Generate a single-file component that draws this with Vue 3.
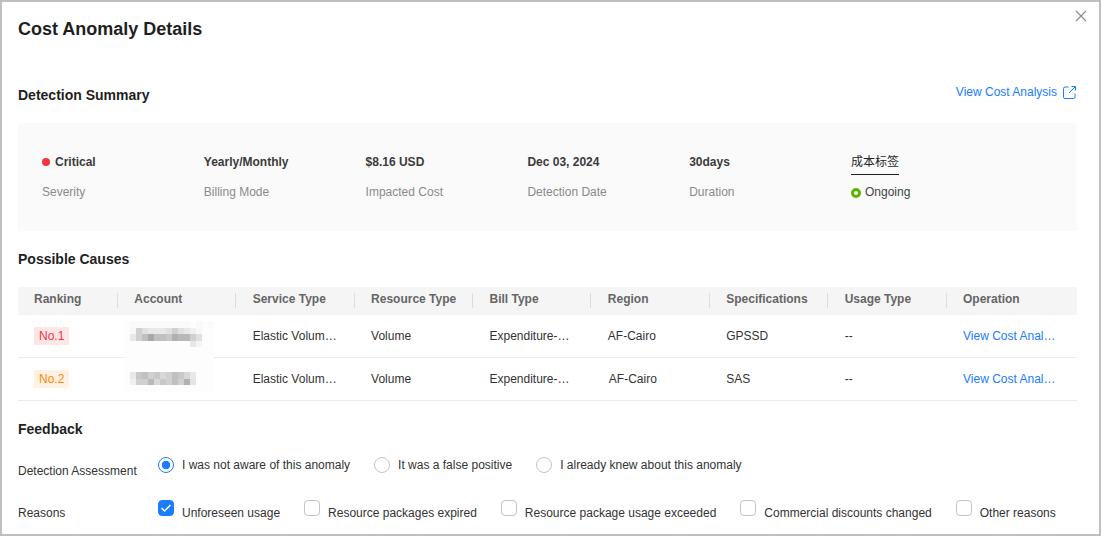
<script setup>
const summary = [
  { value: 'Critical', label: 'Severity', dot: true },
  { value: 'Yearly/Monthly', label: 'Billing Mode' },
  { value: '$8.16 USD', label: 'Impacted Cost' },
  { value: 'Dec 03, 2024', label: 'Detection Date' },
  { value: '30days', label: 'Duration' },
]
const heads = ['Ranking', 'Account', 'Service Type', 'Resource Type', 'Bill Type', 'Region', 'Specifications', 'Usage Type', 'Operation']
const F = 253
const rows = [
  {
    no: 'No.1', cls: 'red', region: 'AF-Cairo', spec: 'GPSSD', nudge: false, top: -15, pad: 0, h: 37,
    blur: [
      [F,250,250,250,250,250,250,250,250,250,250,F,249,F,251],
      [F,248,208,224,232,232,232,224,208,224,232,240,248,F,F],
      [252,232,208,192,168,192,192,200,176,184,184,208,224,F,F],
      [F,F,F,F,F,F,F,F,F,F,F,232,244,F,F],
    ],
  },
  {
    no: 'No.2', cls: 'orange', region: 'AF-Cairo', spec: 'SAS', nudge: true, top: -21, pad: 14, h: 34,
    blur: [
      [252,232,200,192,208,200,216,208,192,200,216,232,F,F,F],
      [252,240,208,208,184,216,200,208,192,208,176,228,F,F,F],
    ],
  },
]
const reasons = [
  { t: 'Unforeseen usage', on: true },
  { t: 'Resource packages expired' },
  { t: 'Resource package usage exceeded' },
  { t: 'Commercial discounts changed' },
  { t: 'Other reasons' },
]
const grey = v => `rgb(${v},${v},${v})`
</script>

<template>
  <div class="frame">
    <svg class="close" width="12" height="12" viewBox="0 0 12 12"><path d="M1 1l10 10M11 1L1 11" stroke="#8a8a8a" stroke-width="1.1" fill="none"/></svg>
    <h1 class="title">Cost Anomaly Details</h1>
    <div class="head-row">
      <h2>Detection Summary</h2>
      <a class="link top-link">View Cost Analysis
        <svg width="13" height="13" viewBox="0 0 13 13" fill="none" stroke="#1a7cff" stroke-width="1"><path d="M5.500 1H2A1.500 1.500 0 0 0 .5 2.500V11A1.500 1.500 0 0 0 2 12.500h8.500A1.500 1.500 0 0 0 12 11V7.500"/><path d="M6 7L12 1M8.500.5H12.500V4.500"/></svg>
      </a>
    </div>
    <div class="summary">
      <div v-for="s in summary" :key="s.label" class="cell">
        <div class="val"><i v-if="s.dot" class="dot"></i>{{ s.value }}</div>
        <div class="lab">{{ s.label }}</div>
      </div>
      <div class="cell">
        <div class="val"><span class="tag">成本标签</span></div>
        <div class="lab on"><i class="ring"></i>Ongoing</div>
      </div>
    </div>
    <h2 class="sec causes">Possible Causes</h2>
    <div class="table">
      <div class="tr th">
        <div v-for="h in heads" :key="h" class="td"><span>{{ h }}</span></div>
      </div>
      <div v-for="r in rows" :key="r.no" class="tr">
        <div class="td"><span class="rank" :class="r.cls">{{ r.no }}</span></div>
        <div class="td acc">
          <div class="blur" :style="{ top: r.top + 'px', paddingTop: r.pad + 'px', height: r.h + 'px' }">
            <div v-for="(line, i) in r.blur" :key="i" class="bl">
              <i v-for="(v, j) in line" :key="j" :style="{ background: grey(v) }"></i>
            </div>
          </div>
        </div>
        <div class="td">Elastic Volum…</div>
        <div class="td">Volume</div>
        <div class="td">Expenditure-…</div>
        <div class="td" :class="{ nudge: r.nudge }">{{ r.region }}</div>
        <div class="td">{{ r.spec }}</div>
        <div class="td">--</div>
        <div class="td blue">View Cost Anal…</div>
      </div>
    </div>
    <h2 class="sec feedback">Feedback</h2>
    <div class="form-row assess">
      <div class="fl">Detection Assessment</div>
      <div class="opts">
        <label class="opt"><i class="radio sel"></i>I was not aware of this anomaly</label>
        <label class="opt"><i class="radio"></i>It was a false positive</label>
        <label class="opt"><i class="radio"></i>I already knew about this anomaly</label>
      </div>
    </div>
    <div class="form-row reasons">
      <div class="fl">Reasons</div>
      <div class="opts">
        <label v-for="r in reasons" :key="r.t" class="copt">
          <i class="box" :class="{ sel: r.on }">
            <svg v-if="r.on" width="16" height="16" viewBox="0 0 16 16"><path d="M3.500 8l3 3 6-6" stroke="#fff" stroke-width="1.500" fill="none"/></svg>
          </i><span class="ctext">{{ r.t }}</span>
        </label>
      </div>
    </div>
  </div>
</template>

<style>
html, body { margin: 0; background: #fff; }
</style>
<style scoped>
.frame {
  box-sizing: border-box;
  width: 1101px;
  height: 536px;
  border: 2px solid #bfbfbf;
  padding: 0 22px 0 16px;
  position: relative;
  overflow: hidden;
  background: #fff;
  font-family: "Liberation Sans", Arial, "Noto Sans CJK SC", sans-serif;
  font-size: 12px;
  color: #333;
}
.close { position: absolute; right: 12px; top: 8px; }
h1, h2 { margin: 0; color: #1f1f1f; font-weight: 700; }
.title { font-size: 18px; line-height: 24px; margin-top: 15px; }
h2 { font-size: 14px; line-height: 20px; }
.head-row { display: flex; justify-content: space-between; margin-top: 44px; height: 20px; }
.link, .blue { color: #1a7cff; }
.top-link { display: flex; gap: 6px; align-items: center; margin-top: -6px; margin-right: 1px; }
.summary { display: flex; margin-top: 18px; height: 108px; background: #fafafa; padding-left: 24px; box-sizing: border-box; }
.cell { width: 161.8px; padding-top: 31px; flex: none; }
.val { height: 16px; line-height: 16px; font-weight: 700; color: #3a3a3a; display: flex; align-items: flex-start; white-space: nowrap; }
.lab { margin-top: 14px; line-height: 16px; color: #8a8a8a; }
.lab.on { display: flex; align-items: center; color: #444; }
.dot { width: 8px; height: 8px; border-radius: 50%; background: #f5333f; margin: 4px 5px 0 0; }
.ring { width: 10px; height: 10px; box-sizing: border-box; border: 3px solid #5cb300; border-radius: 50%; margin-right: 4px; margin-top: 2px; }
.tag { display: block; border-bottom: 1px solid #1f1f1f; padding-bottom: 4px; line-height: 16px; font-weight: 400; color: #1f1f1f; }
.causes { margin-top: 18px; }
.table { margin-top: 18px; }
.tr { display: grid; grid-template-columns: 99.8px repeat(7, 118.4px) 1fr; height: 43px; border-bottom: 1px solid #ebebeb; box-sizing: border-box; align-items: center; }
.th { height: 28px; background: #f5f5f5; border-bottom: 0; color: #666; align-items: start; padding-top: 5px; }
.td { padding-left: 16.5px; min-width: 0; position: relative; line-height: 16px; white-space: nowrap; }
.td:first-child { padding-left: 16px; }
.th .td { font-weight: 700; line-height: 15px; }
.th .td + .td::before { content: ""; position: absolute; left: -1px; top: 1px; height: 15px; width: 1px; background: #dcdcdc; }
.nudge { padding-left: 17.5px; }
.rank { display: inline-block; padding: 0 5px; height: 18px; line-height: 18px; border-radius: 1px; }
.red { color: #f5333f; background: #fee6e7; }
.orange { color: #ff8a00; background: #fff1e3; }
.acc { padding-left: 0; height: 0; }
.blur { position: absolute; left: 6px; width: 90px; background: #fdfdfd; box-sizing: border-box; }
.bl { display: flex; height: 6.500px; }
.bl i { width: 6px; height: 100%; display: block; }
.feedback { margin-top: 18px; }
.form-row { display: flex; align-items: flex-start; }
.assess { margin-top: 18px; }
.reasons { margin-top: 21px; }
.fl { width: 140px; flex: none; line-height: 16px; padding-top: 6px; }
.reasons .fl { padding-top: 5px; }
.opts { display: flex; }
.opt { display: flex; align-items: center; line-height: 16px; margin-right: 24px; }
.radio { width: 16px; height: 16px; box-sizing: border-box; border: 1px solid #c4c4c4; border-radius: 50%; margin-right: 8px; background: #fff; }
.radio.sel { border-color: #1a7cff; background: radial-gradient(circle, #1a7cff 0 4px, #fff 4.500px); }
.copt { display: flex; align-items: flex-start; margin-right: 24px; white-space: nowrap; }
.ctext { line-height: 16px; padding-top: 5px; }
.box { width: 16px; height: 16px; box-sizing: border-box; border: 1px solid #c4c4c4; border-radius: 4px; margin-right: 8px; display: block; flex: none; }
.box.sel { background: #1a7cff; border-color: #1a7cff; }
.box svg { display: block; margin: -1px; }
</style>
